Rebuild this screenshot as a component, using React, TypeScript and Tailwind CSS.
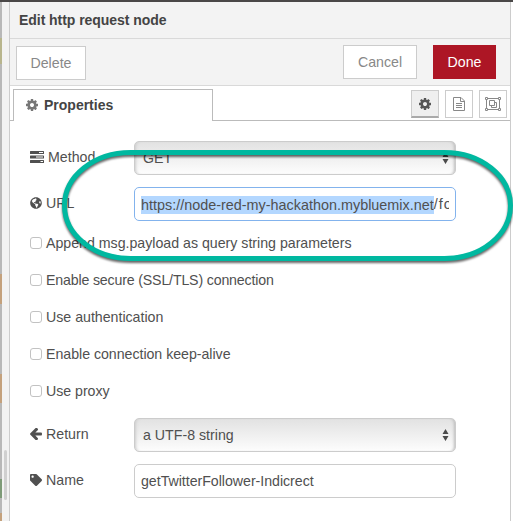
import type { ReactNode } from "react";
import { FaGlobeAmericas, FaTag } from "react-icons/fa";

function Gear({ size, className = "" }: { size: number; className?: string }) {
  return (
    <svg width={size} height={size} viewBox="128 128 1536 1536" fill="currentColor" className={`shrink-0 ${className}`}>
      <path d="M1152 896q0-106-75-181t-181-75-181 75-75 181 75 181 181 75 181-75 75-181zm512-109v222q0 12-8 23t-20 13l-185 28q-19 54-39 91 35 50 107 138 10 12 10 25t-9 23q-27 37-99 108t-94 71q-12 0-26-9l-138-108q-44 23-91 38-16 136-29 186-7 28-36 28h-222q-14 0-24.5-8.5t-11.5-21.5l-28-184q-49-16-90-37l-141 107q-10 9-25 9-14 0-25-11-126-114-165-168-7-10-7-23 0-12 8-23 15-21 51-66.5t54-70.5q-27-50-41-99l-183-27q-13-2-21-12.5t-8-23.5v-222q0-12 8-23t19-13l186-28q14-46 39-92-40-57-107-138-10-12-10-24 0-10 9-23 26-36 98.5-107.5t94.5-71.5q13 0 26 10l138 107q44-23 91-38 16-136 29-186 7-28 36-28h222q14 0 24.5 8.5t11.5 21.5l28 184q49 16 90 37l142-107q9-9 24-9 13 0 25 10 129 119 165 170 7 8 7 22 0 12-8 23-15 21-51 66.5t-54 70.5q26 50 41 98l183 28q13 2 21 12.5t8 23.5z" />
    </svg>
  );
}

function Tasks() {
  return (
    <svg width="14" height="12" viewBox="0 0 14 12" fill="#505050" className="shrink-0">
      <path fillRule="evenodd" d="M.5 0h13q.5 0 .5.5v2q0 .5-.5.5H.5Q0 3 0 2.500v-2Q0 0 .5 0zM9 1v1h4V1zM.5 4.500h13q.5 0 .5.5v2q0 .5-.5.5H.5Q0 7.500 0 7V5q0-.5.5-.5zM6 5.500v1h7v-1zM.5 9h13q.5 0 .5.5v2q0 .5-.5.5H.5q-.5 0-.5-.5v-2Q0 9 .5 9zM10.500 10v1H13v-1z" />
    </svg>
  );
}

function ArrowLeft() {
  return (
    <svg width="12" height="12" viewBox="180 270 1490 1490" fill="#505050" className="shrink-0">
      <path d="M1664 960v128q0 53-32.500 90.500t-84.500 37.500h-704l293 294q38 36 38 90t-38 90l-75 76q-37 37-90 37-52 0-91-37l-651-652q-37-37-37-90 0-52 37-91l651-650q38-38 91-38 52 0 90 38l75 74q38 38 38 91t-38 91l-293 293h704q52 0 84.500 37.500t32.500 90.500z" />
    </svg>
  );
}

function Doc() {
  return (
    <svg width="12" height="14" viewBox="0 0 12 14" fill="none" stroke="#888" className="shrink-0">
      <path d="M.5.5H8L11.500 4v9.500H.5zM7.500.5v4h4M3 6.500h6M3 8.500h6M3 10.500h6" />
    </svg>
  );
}

function ObjectGroup() {
  return (
    <svg width="16" height="14" viewBox="0 0 16 14" fill="none" stroke="#888" className="shrink-0">
      <path d="M3 1.500h10M3 12.500h10M1.500 3v8M14.500 3v8M.5.5h2v2h-2zM13.500.5h2v2h-2zM.5 11.500h2v2h-2zM13.500 11.500h2v2h-2zM4.500 3.500h5v5h-5zM9.500 5.500h2v5h-5v-2" />
    </svg>
  );
}

function Row({ icon, label, children }: { icon: ReactNode; label: string; children: ReactNode }) {
  return (
    <div className="flex h-[34px] items-center">
      <div className="flex w-[104px] shrink-0 items-center gap-1 pb-[2px]">
        {icon}
        <span>{label}</span>
      </div>
      {children}
    </div>
  );
}

function Select({ value }: { value: string }) {
  return (
    <div className="flex h-[34px] w-[322px] items-center justify-between rounded-[5px] border border-[#ccc] bg-linear-to-b from-[#e2e2e2] to-[#fdfdfd] pr-[6px] pl-2 shadow-[inset_-3px_0_3px_-2px_#bbb,inset_3px_0_3px_-2px_#ccc]">
      <span>{value}</span>
      <svg width="7" height="14" viewBox="0 0 7 14" fill="#4a4a4a">
        <path d="M3.500 1 6.500 6H.5zM3.500 13 .5 8h6z" />
      </svg>
    </div>
  );
}

const options = [
  { text: "Append msg.payload as query string parameters", tracking: "tracking-[-0.01px]" },
  { text: "Enable secure (SSL/TLS) connection", tracking: "tracking-[-0.17px]" },
  { text: "Use authentication", tracking: "tracking-[-0.01px]" },
  { text: "Enable connection keep-alive", tracking: "tracking-[-0.03px]" },
  { text: "Use proxy", tracking: "tracking-[-0.03px]" },
];

export default function App() {
  return (
    <div className="relative flex h-[521px] w-[513px] flex-col overflow-hidden bg-white font-['Liberation_Sans',Arial,sans-serif] text-[14.200px] leading-5 text-[#505050]">
      <div className="h-[2px] shrink-0 bg-[#4a4848]" />
      <div className="flex min-h-0 flex-1">
        <div className="flex w-[2px] shrink-0 flex-col bg-[#b8b8b8]">
          <div className="mt-[36px] h-[26px] bg-[#b8b58d]" />
          <div className="mt-[210px] h-[30px] bg-[#c4a17c]" />
          <div className="mt-[70px] h-[29px] bg-[#c4a17c]" />
          <div className="mt-[76px] h-[19px] bg-[#7e9b78]" />
          <div className="mt-[15px] h-[8px] bg-[#c4a17c]" />
        </div>
        <div className="w-[7px] shrink-0 bg-[#f2f2f2] pt-[448px] pl-[2px]">
          <div className="h-[50px] w-[3px] rounded-sm bg-[#d0d0d0]" />
        </div>
        <div className="flex w-[502px] flex-col border-x border-[#ccc]">
          <header className="flex h-[37px] shrink-0 items-center border-b border-[#d9d9d9] bg-[#f3f3f3] pl-[9px] font-bold text-[#444]">
            <span className="text-[14px] tracking-[-0.05px]">Edit http request node</span>
          </header>
          <div className="flex h-[47px] shrink-0 items-center border-b border-[#d9d9d9] bg-[#f3f3f3] pr-[14px] pl-[6px] text-[#888]">
            <button className="mt-px h-[34px] w-[70px] border border-[#ccc] bg-white">Delete</button>
            <button className="mr-4 mb-px ml-auto h-[34px] w-[74px] border border-[#ccc] bg-white">Cancel</button>
            <button className="mb-px h-[34px] w-[63px] bg-[#ad1625] text-white">Done</button>
          </div>
          <div className="flex h-[35px] shrink-0 items-end">
            <div className="h-px w-[3px] bg-[#bbb]" />
            <div className="flex h-[32px] w-[200px] items-center border border-b-0 border-[#bbb] pb-[2px] pl-[12px] font-bold text-[#444]">
              <Gear size={12} className="mr-[6px] text-[#777]" />
              <span className="text-[14px]">Properties</span>
            </div>
            <div className="flex h-full flex-1 items-start justify-end gap-[6px] border-b border-[#bbb] pt-1 pr-[3px] text-[#888]">
              <div className="flex size-7 items-center justify-center border border-b-2 border-[#ccc] border-b-[#aaa] bg-[#efefef] text-[#555]">
                <Gear size={12} />
              </div>
              <div className="flex size-7 items-center justify-center border border-[#ccc]">
                <Doc />
              </div>
              <div className="flex size-7 items-center justify-center border border-[#ccc]">
                <ObjectGroup />
              </div>
            </div>
          </div>
          <form className="flex flex-col pt-5 pl-5">
            <Row icon={<Tasks />} label="Method">
              <Select value="GET" />
            </Row>
            <div className="h-3" />
            <Row icon={<FaGlobeAmericas size={12} />} label="URL">
              <div className="flex h-[34px] w-[322px] items-center rounded-[5px] border border-[#83b3ed] px-[6px]">
                <div className="w-[308px] overflow-hidden text-[14.400px] whitespace-nowrap">
                  <span className="inline-block h-[18px] bg-[#b3d7ff] align-middle leading-[19px]">https://node-red-my-hackathon.mybluemix.net</span>
                  <span className="align-middle tracking-[1px]">/fo</span>
                </div>
              </div>
            </Row>
            <div className="mt-3 flex flex-col gap-[17px]">
              {options.map(({ text, tracking }) => (
                <label key={text} className={`flex h-5 items-center gap-1 ${tracking}`}>
                  <span className="size-[12px] rounded-[3px] border border-[#c2c2c2] bg-white" />
                  {text}
                </label>
              ))}
            </div>
            <div className="h-[17px]" />
            <Row icon={<ArrowLeft />} label="Return">
              <Select value="a UTF-8 string" />
            </Row>
            <div className="h-3" />
            <Row icon={<FaTag size={12} />} label="Name">
              <div className="flex h-[34px] w-[322px] items-center rounded-[5px] border border-[#ccc] px-[6px] tracking-[-0.03px]">getTwitterFollower-Indicrect</div>
            </Row>
          </form>
        </div>
      </div>
      <svg width="513" height="521" viewBox="0 0 513 521" className="pointer-events-none absolute top-0 left-0 drop-shadow-[0_2px_1px_rgba(0,0,0,0.6)]">
        <rect x="64.500" y="152.500" width="446" height="106" rx="66" ry="53" fill="none" stroke="#00b8a0" strokeWidth="5" />
      </svg>
    </div>
  );
}
